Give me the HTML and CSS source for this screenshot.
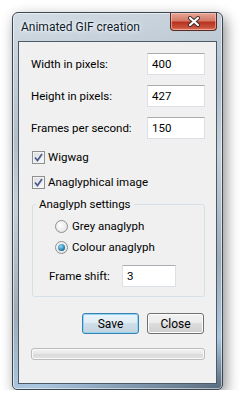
FILE: index.html
```html
<!DOCTYPE html>
<html lang="en">
  <head>
    <meta charset="UTF-8" />
    <title>Animated GIF creation</title>
    <link rel="stylesheet" href="styles.css">
  </head>
  <body>
    <div class="window">
      <div class="titlebar">
        <span class="title">Animated GIF creation</span>
        <div class="close-btn">
          <svg width="14" height="11" viewBox="0 0 14 11">
            <path d="M3 2 L11 9 M11 2 L3 9" stroke="#3b2a2a" stroke-width="4" stroke-linecap="round" />
            <path d="M3 2 L11 9 M11 2 L3 9" stroke="#fff" stroke-width="2.2" stroke-linecap="round" />
          </svg>
        </div>
      </div>

      <div class="client">
        <div class="field">
          <label>Width in pixels:</label>
          <input class="text-box" type="text" value="400" />
        </div>
        <div class="field">
          <label>Height in pixels:</label>
          <input class="text-box" type="text" value="427" />
        </div>
        <div class="field">
          <label>Frames per second:</label>
          <input class="text-box" type="text" value="150" />
        </div>

        <div class="check first">
          <span class="check-box">
            <svg width="9" height="9" viewBox="0 0 9 9">
              <path d="M1 4.5 L3.5 7.5 L8 1" fill="none" stroke="#4a5f97" stroke-width="1.8" />
            </svg>
          </span>
          Wigwag
        </div>
        <div class="check">
          <span class="check-box">
            <svg width="9" height="9" viewBox="0 0 9 9">
              <path d="M1 4.5 L3.5 7.5 L8 1" fill="none" stroke="#4a5f97" stroke-width="1.8" />
            </svg>
          </span>
          Anaglyphical image
        </div>

        <fieldset class="group">
          <legend>Anaglyph settings</legend>
          <div class="radio first">
            <span class="radio-dot"></span>
            Grey anaglyph
          </div>
          <div class="radio">
            <span class="radio-dot checked"></span>
            Colour anaglyph
          </div>
          <div class="shift">
            <label>Frame shift:</label>
            <input class="text-box small" type="text" value="3" />
          </div>
        </fieldset>

        <div class="buttons">
          <button class="btn default">Save</button>
          <button class="btn">Close</button>
        </div>

        <div class="progress"></div>
      </div>
    </div>
  </body>
</html>
```

FILE: styles.css
```css
body {
  margin: 0;
  padding: 12px 0 0 12px;
  background-color: #fff;
  font-family: Roboto, "Noto Sans", sans-serif;
  font-size: 11.5px;
  color: #000;
}
.window {
  width: 211px;
  height: 378px;
  box-sizing: border-box;
  border: 1px solid #3c4650;
  border-radius: 6px 6px 5px 5px;
  background: linear-gradient(165deg, #d2dce5 0%, #b2bfcb 30%, #c6d0d9 45%, #9eacb8 70%, #a9c6e0 88%, #55687a 100%);
  box-shadow: 3px 5px 14px rgba(0, 0, 0, 0.45), inset 0 0 0 1px rgba(255, 255, 255, 0.55);
  padding: 0 5px 5px 5px;
}
.titlebar {
  height: 28px;
  display: flex;
  align-items: flex-start;
  justify-content: space-between;
}
.title {
  margin: 7px 0 0 3px;
  font-size: 12px;
  color: #0c1a2a;
  text-shadow: 0 0 6px #fff, 0 0 3px #fff;
}
.close-btn {
  width: 47px;
  height: 18px;
  box-sizing: border-box;
  border: 1px solid #5a2a22;
  border-top: none;
  border-radius: 0 0 4px 4px;
  background: linear-gradient(#e6a594 0%, #d47a68 45%, #b8331f 55%, #c8503c 85%, #e07a5a 100%);
  box-shadow: inset 0 0 0 1px rgba(255, 210, 200, 0.55);
  display: flex;
  align-items: center;
  justify-content: center;
}
.client {
  height: 343px;
  box-sizing: border-box;
  border: 1px solid #4c5a66;
  background-color: #f0f0f0;
  padding: 11px 11px 0 12px;
}
.field {
  display: flex;
  align-items: center;
  justify-content: space-between;
  height: 22px;
  margin-bottom: 10px;
}
.text-box {
  width: 58px;
  height: 22px;
  box-sizing: border-box;
  border: 1px solid #dbdfe6;
  border-top-color: #abadb3;
  background: #fff;
  font-family: inherit;
  font-size: 11.5px;
  padding: 0 0 0 4px;
  margin: 0;
  outline: none;
}
.text-box.small {
  width: 54px;
}
.check {
  display: flex;
  align-items: center;
  height: 16px;
  margin: 9px 0 0 1px;
}
.check.first {
  margin-top: 3px;
}
.check-box {
  width: 13px;
  height: 13px;
  box-sizing: border-box;
  border: 1px solid #8e8f8f;
  background: linear-gradient(135deg, #dcdcdc, #fbfbfb);
  box-shadow: inset 0 0 0 1px #f4f4f4;
  margin-right: 3px;
  display: flex;
  align-items: center;
  justify-content: center;
}
.group {
  margin: 6px 0 0 1px;
  padding: 0 0 9px 0;
  border: 1px solid #d5dfe5;
  border-radius: 3px;
  min-width: 0;
}
.group legend {
  margin-left: 3px;
  padding: 0 3px;
  line-height: 16px;
}
.radio {
  display: flex;
  align-items: center;
  height: 16px;
  margin: 5px 0 0 22px;
}
.radio.first {
  margin-top: 6px;
}
.radio-dot {
  width: 13px;
  height: 13px;
  box-sizing: border-box;
  border-radius: 50%;
  border: 1px solid #8e8f8f;
  background: radial-gradient(circle at 40% 40%, #fff, #dcdcdc);
  margin-right: 4px;
  display: flex;
  align-items: center;
  justify-content: center;
}
.radio-dot.checked::after {
  content: "";
  width: 7px;
  height: 7px;
  border-radius: 50%;
  background: radial-gradient(circle at 40% 35%, #8fe0fb, #1c6f9c 70%, #0b4f7b);
}
.shift {
  display: flex;
  align-items: center;
  height: 22px;
  margin: 10px 0 0 16px;
}
.shift label {
  width: 73px;
}
.buttons {
  display: flex;
  justify-content: flex-end;
  gap: 8px;
  margin: 16px 1px 0 0;
}
.btn {
  width: 57px;
  height: 21px;
  padding: 0;
  border: 1px solid #707070;
  border-radius: 3px;
  background: linear-gradient(#f2f2f2 0%, #ebebeb 50%, #dddddd 50%, #cfcfcf 100%);
  box-shadow: inset 0 0 0 1px #fcfcfc;
  font-family: inherit;
  font-size: 12px;
  color: #000;
}
.btn.default {
  border-color: #3c7fb1;
  box-shadow: inset 0 0 0 1px #8fd6f5;
  background: linear-gradient(#eaf4fa 0%, #e0ecf3 50%, #cfdfe9 50%, #c3d4df 100%);
}
.progress {
  height: 12px;
  margin-top: 14px;
  box-sizing: border-box;
  border: 1px solid #bcbcbc;
  border-radius: 3px;
  background: linear-gradient(#f3f3f3 0%, #e6e6e6 50%, #dadada 51%, #e2e2e2 100%);
  box-shadow: inset 0 0 0 1px #f9f9f9;
}
```
